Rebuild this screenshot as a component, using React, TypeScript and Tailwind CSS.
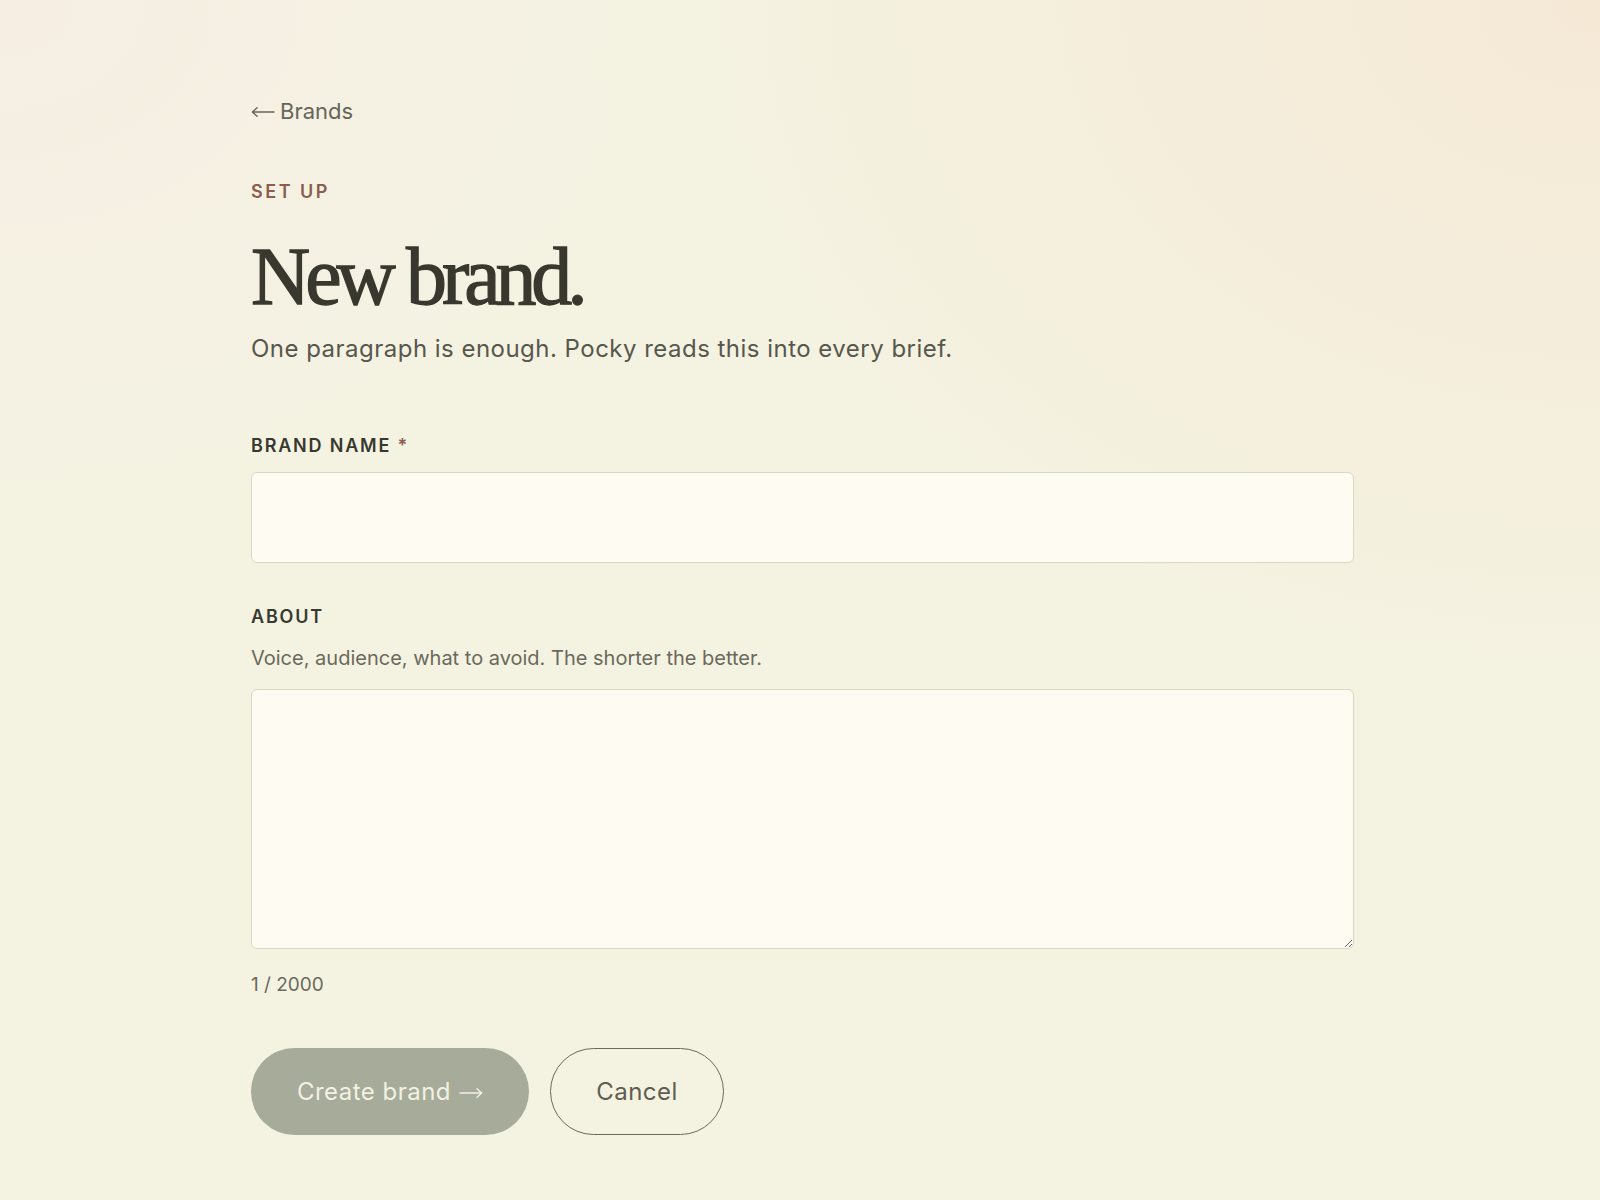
import React from "react";

function LongArrow({ dir, className }: { dir: "left" | "right"; className?: string }) {
  return (
    <svg
      viewBox="0 0 24 12"
      width="24"
      height="12"
      fill="none"
      stroke="currentColor"
      strokeWidth="1.4"
      strokeLinecap="round"
      strokeLinejoin="round"
      className={className}
    >
      {dir === "left" ? (
        <>
          <path d="M1.5 6H23" />
          <path d="M6 1.8L1.5 6L6 10.2" />
        </>
      ) : (
        <>
          <path d="M1 6H22.5" />
          <path d="M18 1.8L22.5 6L18 10.2" />
        </>
      )}
    </svg>
  );
}

export default function App() {
  const sans = "font-['Inter','Noto_Sans',sans-serif]";
  return (
    <div
      className={`min-h-[1200px] w-full bg-[#f4f3e2] bg-[radial-gradient(ellipse_at_top_right,#f5e9d6_0%,rgba(244,243,226,0)_45%),radial-gradient(ellipse_at_top_left,#f6eee3_0%,rgba(244,243,226,0)_30%)] ${sans}`}
    >
      <div className="ml-[251px] flex w-[1103px] flex-col pt-[95px]">
        <a className="flex items-center gap-[5px] text-[22px] leading-[32px] text-[#66655a]">
          <LongArrow dir="left" className="mt-[2px]" />
          <span>Brands</span>
        </a>
        <div className="mt-[53px] text-[18px] font-semibold leading-[24px] tracking-[0.14em] text-[#8a5d4e]">
          SET UP
        </div>
        <h1 className="mt-[32px] font-['Liberation_Serif','Times_New_Roman',serif] text-[82px] font-normal leading-[82px] tracking-[-0.062em] text-[#38382f] [-webkit-text-stroke:1.3px_#38382f]">
          New brand.
        </h1>
        <p className="mt-[15px] text-[24px] leading-[32px] tracking-[0.02em] text-[#57574d]">
          One paragraph is enough. Pocky reads this into every brief.
        </p>
        <label className="mt-[69px] text-[18px] font-semibold leading-[24px] tracking-[0.1em] text-[#38382f]">
          BRAND NAME <span className="text-[#8a5d4e]">*</span>
        </label>
        <input
          type="text"
          className="mt-[14px] h-[91px] w-full rounded-[6px] border-[1.5px] border-[#dad7c5] bg-[#fefbf2] px-5 text-[22px] text-[#38382f] outline-none"
        />
        <label className="mt-[42px] text-[18px] font-semibold leading-[24px] tracking-[0.1em] text-[#38382f]">
          ABOUT
        </label>
        <div className="mt-[15px] text-[20px] leading-[28px] text-[#6a695c]">
          Voice, audience, what to avoid. The shorter the better.
        </div>
        <textarea className="mt-[17px] block h-[260px] w-full resize-y rounded-[6px] border-[1.5px] border-[#dad7c5] bg-[#fefbf2] p-5 text-[20px] text-[#38382f] outline-none" />
        <div className="mt-[22px] text-[19px] leading-[28px] text-[#6a695c]">1 / 2000</div>
        <div className="mt-[49px] flex items-center gap-[21px]">
          <button className="flex h-[87px] w-[278px] items-center justify-center gap-[8px] rounded-full bg-[#a6ab9a] text-[24px] tracking-[0.02em] text-[#f3f1e3]">
            <span>Create brand</span>
            <LongArrow dir="right" className="mt-[3px]" />
          </button>
          <button className="flex h-[87px] w-[174px] items-center justify-center rounded-full border-[1.5px] border-[#6b6a5c] text-[24px] tracking-[0.02em] text-[#5e5d50]">
            Cancel
          </button>
        </div>
      </div>
    </div>
  );
}
